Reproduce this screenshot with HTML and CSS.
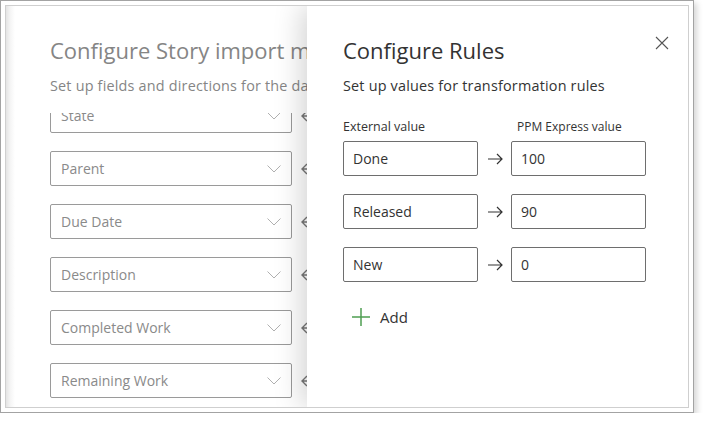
FILE: index.html
```html
<!DOCTYPE html>
<html lang="en">
<head>
<meta charset="utf-8">
<title>Configure Rules</title>
<link rel="stylesheet" href="styles.css">
</head>
<body>
<div class="frame">
  <div class="inner">
    <section class="mapping">
      <h1 class="title muted">Configure Story import mapping</h1>
      <p class="subtitle muted">Set up fields and directions for the data synchronization</p>
      <div class="field-viewport">
        <div class="field-list">
          <div class="field-row">
            <div class="dropdown"><span>State</span><svg class="chevron" viewBox="0 0 14 8"><path d="M0.5 0.5 L7 7 L13.5 0.5"/></svg></div>
            <svg class="dir-arrow" viewBox="0 0 16 12"><path d="M6 1 L1 6 L6 11 M1 6 H15"/></svg>
          </div>
          <div class="field-row">
            <div class="dropdown"><span>Parent</span><svg class="chevron" viewBox="0 0 14 8"><path d="M0.5 0.5 L7 7 L13.5 0.5"/></svg></div>
            <svg class="dir-arrow" viewBox="0 0 16 12"><path d="M6 1 L1 6 L6 11 M1 6 H15"/></svg>
          </div>
          <div class="field-row">
            <div class="dropdown"><span>Due Date</span><svg class="chevron" viewBox="0 0 14 8"><path d="M0.5 0.5 L7 7 L13.5 0.5"/></svg></div>
            <svg class="dir-arrow" viewBox="0 0 16 12"><path d="M6 1 L1 6 L6 11 M1 6 H15"/></svg>
          </div>
          <div class="field-row">
            <div class="dropdown"><span>Description</span><svg class="chevron" viewBox="0 0 14 8"><path d="M0.5 0.5 L7 7 L13.5 0.5"/></svg></div>
            <svg class="dir-arrow" viewBox="0 0 16 12"><path d="M6 1 L1 6 L6 11 M1 6 H15"/></svg>
          </div>
          <div class="field-row">
            <div class="dropdown"><span>Completed Work</span><svg class="chevron" viewBox="0 0 14 8"><path d="M0.5 0.5 L7 7 L13.5 0.5"/></svg></div>
            <svg class="dir-arrow" viewBox="0 0 16 12"><path d="M6 1 L1 6 L6 11 M1 6 H15"/></svg>
          </div>
          <div class="field-row">
            <div class="dropdown"><span>Remaining Work</span><svg class="chevron" viewBox="0 0 14 8"><path d="M0.5 0.5 L7 7 L13.5 0.5"/></svg></div>
            <svg class="dir-arrow" viewBox="0 0 16 12"><path d="M6 1 L1 6 L6 11 M1 6 H15"/></svg>
          </div>
        </div>
      </div>
    </section>

    <aside class="rules">
      <button class="close" aria-label="Close">
        <svg viewBox="0 0 14 14"><path d="M1 1 L13 13 M13 1 L1 13"/></svg>
      </button>
      <h2 class="title">Configure Rules</h2>
      <p class="subtitle">Set up values for transformation rules</p>
      <div class="col-labels">
        <span class="col-label ext">External value</span>
        <span class="col-label ppm">PPM Express value</span>
      </div>
      <div class="rule-list">
        <div class="rule-row">
          <div class="text-input">Done</div>
          <svg class="map-arrow" viewBox="0 0 16 12"><path d="M1 6 H15 M10 1 L15 6 L10 11"/></svg>
          <div class="text-input">100</div>
        </div>
        <div class="rule-row">
          <div class="text-input">Released</div>
          <svg class="map-arrow" viewBox="0 0 16 12"><path d="M1 6 H15 M10 1 L15 6 L10 11"/></svg>
          <div class="text-input">90</div>
        </div>
        <div class="rule-row">
          <div class="text-input">New</div>
          <svg class="map-arrow" viewBox="0 0 16 12"><path d="M1 6 H15 M10 1 L15 6 L10 11"/></svg>
          <div class="text-input">0</div>
        </div>
      </div>
      <button class="add">
        <svg class="plus" viewBox="0 0 18 18"><path d="M9 0 V18 M0 9 H18"/></svg>
        <span>Add</span>
      </button>
    </aside>
  </div>
</div>
</body>
</html>
```

FILE: styles.css
```css
* {
  box-sizing: border-box;
  margin: 0;
  padding: 0;
}

body {
  margin: 0;
  background: #ffffff;
  font-family: "Open Sans", "Noto Sans", sans-serif;
  color: #333333;
}

.frame {
  width: 694px;
  height: 413px;
  border: 1px solid #a3a3a3;
  padding: 4px;
  background: #ffffff;
  box-shadow: 3px 3px 6px rgba(0, 0, 0, 0.16);
}

.inner {
  height: 100%;
  border: 1px solid #cfcfcf;
  overflow: hidden;
  display: flex;
}

/* background (left) panel, partly covered by the rules panel */
.mapping {
  flex: 0 0 301px;
  min-width: 0;
  overflow: hidden;
  display: flex;
  flex-direction: column;
  padding: 29px 0 0 44px;
  background: linear-gradient(to right, #e4e4e4 0px, #f4f4f4 4px, #ffffff 9px);
}

.title {
  font-size: 22px;
  line-height: 30px;
  font-weight: 400;
  white-space: nowrap;
  color: #333333;
}

.subtitle {
  margin-top: 11px;
  font-size: 14.4px;
  letter-spacing: 0.2px;
  line-height: 20px;
  white-space: nowrap;
  color: #333333;
}

.muted {
  color: #858585;
}

.field-viewport {
  flex: 1;
  margin-top: 17px;
  overflow: hidden;
}

.field-list {
  margin-top: -15px;
  display: flex;
  flex-direction: column;
  gap: 18px;
}

.field-row {
  display: flex;
  align-items: center;
  gap: 9px;
}

.dropdown {
  flex: 0 0 242px;
  height: 35px;
  border: 1px solid #9a9a9a;
  border-radius: 2px;
  padding: 0 10px;
  display: flex;
  align-items: center;
  justify-content: space-between;
  font-size: 14px;
  line-height: 20px;
  color: #8a8a8a;
}

.chevron {
  width: 14px;
  height: 8px;
  fill: none;
  stroke: #b0b0b0;
  stroke-width: 1;
}

.dir-arrow {
  flex: 0 0 16px;
  height: 12px;
  fill: none;
  stroke: #777777;
  stroke-width: 1.4;
}

/* foreground (right) panel */
.rules {
  position: relative;
  z-index: 1;
  flex: 1;
  background: #ffffff;
  padding: 29px 0 0 36px;
  box-shadow: -6px 0 26px rgba(0, 0, 0, 0.17);
}

.close {
  position: absolute;
  top: 30px;
  right: 19px;
  width: 14px;
  height: 14px;
  border: 0;
  background: none;
  display: block;
}

.close svg {
  width: 14px;
  height: 14px;
  display: block;
  fill: none;
  stroke: #555555;
  stroke-width: 1.1;
}

.col-labels {
  margin-top: 23px;
  display: flex;
  font-size: 12.5px;
  line-height: 16px;
  color: #333333;
}

.col-label.ext {
  width: 174px;
}

.col-label.ppm {
  font-size: 12px;
}

.rule-list {
  margin-top: 6px;
  display: flex;
  flex-direction: column;
  gap: 18px;
}

.rule-row {
  display: flex;
  align-items: center;
}

.text-input {
  width: 135px;
  height: 35px;
  border: 1px solid #6e6e6e;
  border-radius: 2px;
  padding: 0 9px;
  display: flex;
  align-items: center;
  font-size: 14px;
  line-height: 20px;
  color: #333333;
}

.map-arrow {
  width: 16px;
  height: 12px;
  margin: 0 8px 0 9px;
  fill: none;
  stroke: #333333;
  stroke-width: 1.2;
}

.add {
  margin-top: 25px;
  margin-left: 9px;
  border: 0;
  background: none;
  display: flex;
  align-items: center;
  gap: 10px;
  font-family: inherit;
  font-size: 15px;
  line-height: 20px;
  color: #333333;
}

.plus {
  width: 18px;
  height: 18px;
  fill: none;
  stroke: #4f9f52;
  stroke-width: 1.5;
}
```
